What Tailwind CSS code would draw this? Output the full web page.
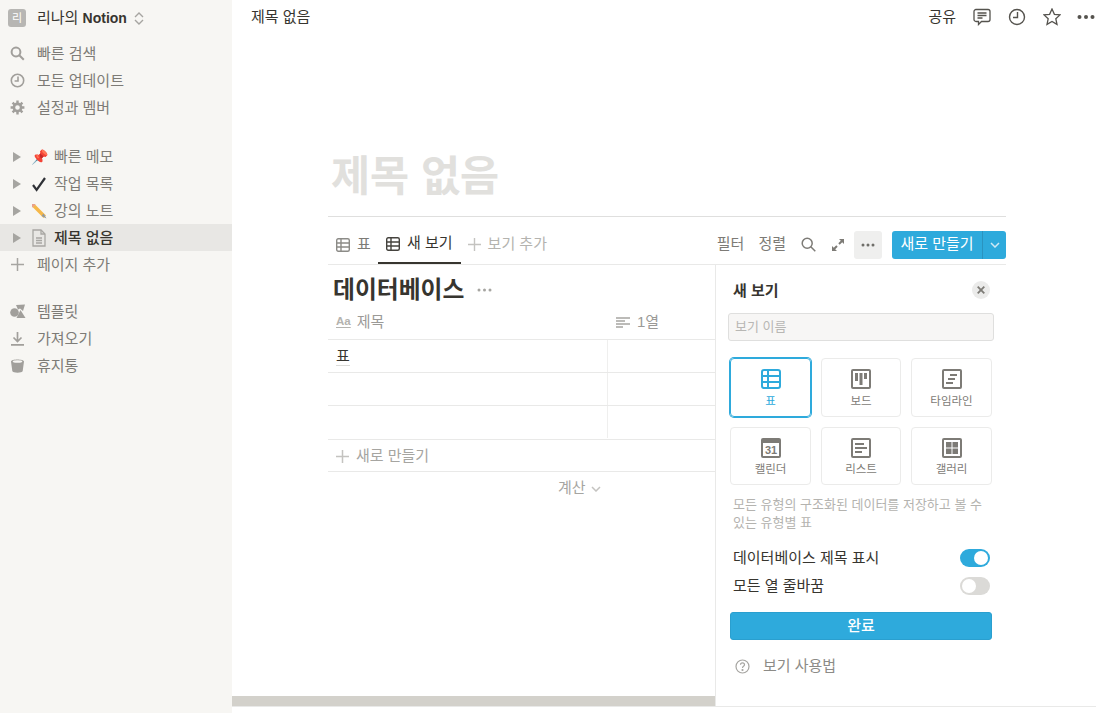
<!DOCTYPE html>
<html lang="ko">
<head>
  <meta charset="UTF-8" />
  <title>제목 없음</title>
  <script src="https://cdn.jsdelivr.net/npm/@tailwindcss/browser@4"></script>
</head>
<body class="w-[1096px] h-[713px] overflow-hidden bg-white text-[#37352f] text-[15px] font-['Liberation_Sans','Noto_Sans_CJK_KR',sans-serif]">
<div class="flex h-[713px]">

  <!-- sidebar -->
  <aside class="w-[232px] shrink-0 bg-[#f7f6f3] text-[#7d7b76]">
    <div class="flex items-center h-[36px] pl-[8px]">
      <span class="w-[18px] h-[18px] rounded-[3px] bg-[#b7b6b3] text-white text-[11px] flex items-center justify-center">리</span>
      <span class="ml-[11px] text-[#37352f]">리나의 <b class="font-bold text-[14px]">Notion</b></span>
      <svg class="ml-[7px]" width="10" height="15" viewBox="0 0 10 15" fill="none" stroke="#a6a5a1" stroke-width="1.4"><path d="M1 6l4-4 4 4M1 9l4 4 4-4"/></svg>
    </div>

    <div class="mt-[4px]">
      <div class="flex items-center h-[27px] pl-[10px]">
        <svg width="15" height="15" viewBox="0 0 15 15" fill="none" stroke="#a19f9b" stroke-width="2"><circle cx="6" cy="6" r="4.4"/><path d="M9.3 9.3l4.5 4.5"/></svg>
        <span class="ml-[12px] mt-[1px]">빠른 검색</span>
      </div>
      <div class="flex items-center h-[27px] pl-[10px]">
        <svg width="15" height="15" viewBox="0 0 15 15" fill="none" stroke="#a19f9b" stroke-width="1.6"><circle cx="7.5" cy="7.5" r="6.2"/><path d="M8 3.6v4.4H4.6"/></svg>
        <span class="ml-[12px] mt-[1px]">모든 업데이트</span>
      </div>
      <div class="flex items-center h-[27px] pl-[10px]">
        <svg width="15" height="15" viewBox="0 0 15 15" fill="none" stroke="#a19f9b"><circle cx="7.5" cy="7.5" r="3.6" stroke-width="2.6"/><path stroke-width="2.4" d="M7.5 .6v2.4M7.5 12v2.4M.6 7.5H3M12 7.5h2.4M2.6 2.6l1.7 1.7M10.7 10.7l1.7 1.7M12.4 2.6l-1.7 1.7M4.3 10.7l-1.7 1.7"/></svg>
        <span class="ml-[12px] mt-[1px]">설정과 멤버</span>
      </div>
    </div>

    <div class="mt-[22px]">
      <div class="flex items-center h-[27px] pl-[12px]">
        <svg width="9" height="10" viewBox="0 0 9 10" fill="#a6a5a1"><path d="M1 0l8 5-8 5z"/></svg>
        <span class="w-[16px] ml-[10px] text-[14px] leading-none">📌</span>
        <span class="ml-[7px] mt-[1px]">빠른 메모</span>
      </div>
      <div class="flex items-center h-[27px] pl-[12px]">
        <svg width="9" height="10" viewBox="0 0 9 10" fill="#a6a5a1"><path d="M1 0l8 5-8 5z"/></svg>
        <svg class="ml-[10px]" width="16" height="16" viewBox="0 0 16 16" fill="none" stroke="#2f3136" stroke-width="2.2"><path d="M2 9l3.6 4.8L14 2"/></svg>
        <span class="ml-[7px] mt-[1px]">작업 목록</span>
      </div>
      <div class="flex items-center h-[27px] pl-[12px]">
        <svg width="9" height="10" viewBox="0 0 9 10" fill="#a6a5a1"><path d="M1 0l8 5-8 5z"/></svg>
        <svg class="ml-[10px]" width="16" height="16" viewBox="0 0 16 16"><path d="M4 1.500l11 11-2.500 2.500-11-11z" fill="#f5b84a"/><path d="M1 1h3l.5.5L1.500 4.500 1 4z" fill="#e8a08c"/><path d="M12.500 10.500L15.500 15.500l-5-2.500z" fill="#8f9aa3"/></svg>
        <span class="ml-[7px] mt-[1px]">강의 노트</span>
      </div>
      <div class="flex items-center h-[27px] pl-[12px] bg-[#e8e7e4]">
        <svg width="9" height="10" viewBox="0 0 9 10" fill="#a6a5a1"><path d="M1 0l8 5-8 5z"/></svg>
        <svg class="ml-[10px]" width="16" height="18" viewBox="0 0 16 18" fill="none" stroke="#a8a7a3" stroke-width="1.300"><path d="M2 1h8l4 4v12H2z"/><path d="M10 1v4h4M5 9h6M5 11.500h6M5 14h6"/></svg>
        <span class="ml-[7px] mt-[1px] text-[#37352f] font-medium">제목 없음</span>
      </div>
      <div class="flex items-center h-[27px] pl-[10px]">
        <svg width="15" height="15" viewBox="0 0 15 15" stroke="#a6a5a1" stroke-width="1.500"><path d="M7.500 1v13M1 7.500h13"/></svg>
        <span class="ml-[12px] mt-[1px]">페이지 추가</span>
      </div>
    </div>

    <div class="mt-[20px]">
      <div class="flex items-center h-[27px] pl-[10px]">
        <svg width="16" height="15" viewBox="0 0 16 15" fill="#a19f9b"><circle cx="4.500" cy="8.500" r="4.300"/><path d="M6 1l9-.5-2 6.500-3-2.500-2 1z"/><path d="M10.500 6l5 8h-9z"/></svg>
        <span class="ml-[11px] mt-[1px]">템플릿</span>
      </div>
      <div class="flex items-center h-[27px] pl-[10px]">
        <svg width="15" height="15" viewBox="0 0 15 15" fill="none" stroke="#a19f9b" stroke-width="1.700"><path d="M7.500 1v9M3.500 6.500l4 4 4-4M1 13.800h13"/></svg>
        <span class="ml-[12px] mt-[1px]">가져오기</span>
      </div>
      <div class="flex items-center h-[27px] pl-[10px]">
        <svg width="15" height="15" viewBox="0 0 15 15" fill="#a19f9b"><path d="M1 3.500C1 .8 14 .8 14 3.500L12.700 13c-.3 2.300-10 2.300-10.400 0z"/><ellipse cx="7.500" cy="3.500" rx="4.800" ry="1.300" fill="#f7f6f3"/></svg>
        <span class="ml-[12px] mt-[1px]">휴지통</span>
      </div>
    </div>
  </aside>

  <!-- main -->
  <main class="flex-1 min-w-0 h-[707px] relative flex flex-col border-b border-[#e9e9e8]">
    <header class="h-[34px] flex items-center pl-[19px] pr-[1px] shrink-0">
      <span>제목 없음</span>
      <span class="ml-auto">공유</span>
      <svg class="ml-[17px]" width="18" height="18" viewBox="0 0 18 18" fill="none" stroke="#55534e" stroke-width="1.300"><path d="M3 1.500h12a2 2 0 0 1 2 2v8a2 2 0 0 1-2 2H8.500l-3 3v-3H3a2 2 0 0 1-2-2v-8a2 2 0 0 1 2-2z"/><path d="M4.500 5h9M4.500 7.500h9M4.500 10h5"/></svg>
      <svg class="ml-[17px]" width="18" height="18" viewBox="0 0 18 18" fill="none" stroke="#55534e" stroke-width="1.400"><circle cx="9" cy="9" r="7.500"/><path d="M9.500 4v5.500H5"/></svg>
      <svg class="ml-[17px]" width="18" height="18" viewBox="0 0 18 18" fill="none" stroke="#55534e" stroke-width="1.300"><path d="M9 1l2.400 5.300 5.600.6-4.200 3.800 1.200 5.700L9 13.500l-5 2.900 1.200-5.700L1 6.900l5.600-.6z"/></svg>
      <svg class="ml-[16px]" width="18" height="18" viewBox="0 0 18 18" fill="#55534e"><circle cx="2.500" cy="9" r="2"/><circle cx="9" cy="9" r="2"/><circle cx="15.500" cy="9" r="2"/></svg>
    </header>

    <div class="ml-[96px] w-[678px] flex-1 flex flex-col min-h-0">
      <h1 class="mt-[115px] h-[56px] leading-[56px] pl-[3px] text-[42.5px] font-bold text-[#e1e0dd] shrink-0">제목 없음</h1>
      <div class="mt-[11px] border-t border-b border-t-[#dfdfde] border-b-[#e9e9e8] h-[49px] pt-[8px] flex items-center shrink-0">
        <div class="w-[50px] h-full flex items-center pl-[8px] text-[#7d7b76]">
          <svg width="14" height="14" viewBox="0 0 14 14" fill="none" stroke="#8c8b87" stroke-width="1.400"><rect x=".7" y=".7" width="12.600" height="12.600" rx="1.500"/><path d="M.7 5h12.600M.7 9h12.600M5 .7v12.600"/></svg>
          <span class="ml-[7px]">표</span>
        </div>
        <div class="h-full flex items-center px-[8px] border-b-2 border-[#37352f]">
          <svg width="14" height="14" viewBox="0 0 14 14" fill="none" stroke="#45433e" stroke-width="1.400"><rect x=".7" y=".7" width="12.600" height="12.600" rx="1.500"/><path d="M.7 5h12.600M.7 9h12.600M5 .7v12.600"/></svg>
          <span class="ml-[7px]">새 보기</span>
        </div>
        <div class="h-full flex items-center pl-[7px] text-[#b4b3af]">
          <svg width="13" height="13" viewBox="0 0 13 13" stroke="#c4c3c0" stroke-width="1.400"><path d="M6.500 0v13M0 6.500h13"/></svg>
          <span class="ml-[7px]">보기 추가</span>
        </div>
        <div class="ml-auto flex items-center text-[#7d7b76]">
          <span>필터</span>
          <span class="ml-[14px]">정렬</span>
          <svg class="ml-[15px]" width="15" height="15" viewBox="0 0 15 15" fill="none" stroke="#7d7b76" stroke-width="1.500"><circle cx="6.200" cy="6.200" r="5"/><path d="M9.800 9.800l4.500 4.500"/></svg>
          <svg class="ml-[16px]" width="12" height="12" viewBox="0 0 12 12" fill="#7d7b76"><path d="M7 0h5v5l-1.800-1.800-2.500 2.500-1.400-1.400 2.500-2.500zM5 12H0V7l1.800 1.800 2.500-2.500 1.400 1.400-2.500 2.500z"/></svg>
          <span class="ml-[10px] w-[28px] h-[28px] rounded-[3px] bg-[#efefee] flex items-center justify-center">
            <svg width="14" height="4" viewBox="0 0 14 4" fill="#6f6e69"><circle cx="2" cy="2" r="1.500"/><circle cx="7" cy="2" r="1.500"/><circle cx="12" cy="2" r="1.500"/></svg>
          </span>
          <div class="ml-[10px] h-[28px] w-[114px] rounded-[3px] bg-[#2eaadc] text-white flex items-center">
            <span class="w-[90px] text-center">새로 만들기</span>
            <span class="w-px h-full bg-[#2a93bf]"></span>
            <span class="flex-1 flex justify-center">
              <svg width="10" height="6" viewBox="0 0 10 6" fill="none" stroke="#cfe9f5" stroke-width="1.500"><path d="M1 1l4 4 4-4"/></svg>
            </span>
          </div>
        </div>
      </div>

      <div class="flex-1 flex min-h-0">
        <!-- table -->
        <section class="w-[388px] shrink-0 border-r border-[#e9e9e8]">
          <div class="h-[47px] pl-[5px] pt-[2px] flex items-center">
            <span class="text-[23.8px] font-bold">데이터베이스</span>
            <svg class="ml-[13px]" width="15" height="4" viewBox="0 0 15 4" fill="#a6a5a1"><circle cx="2" cy="2" r="1.500"/><circle cx="7.500" cy="2" r="1.500"/><circle cx="13" cy="2" r="1.500"/></svg>
          </div>
          <div class="h-[28px] pb-[7px] flex text-[#9b9a97] border-b border-[#e9e9e8]">
            <div class="w-[280px] flex items-center pl-[8px]">
              <span class="text-[11.5px] font-bold text-[#b4b3af] underline underline-offset-2">Aa</span>
              <span class="ml-[6px]">제목</span>
            </div>
            <div class="flex items-center pl-[8px]">
              <svg width="14" height="11" viewBox="0 0 14 11" stroke="#a6a5a1" stroke-width="1.500"><path d="M0 1h14M0 4h9M0 7h14M0 10h7"/></svg>
              <span class="ml-[7px]">1열</span>
            </div>
          </div>
          <div class="h-[33px] flex border-b border-[#e9e9e8]">
            <div class="w-[280px] border-r border-[#efefee] flex items-center pl-[8px]"><span class="border-b border-[#dcdcda] leading-[18px]">표</span></div>
          </div>
          <div class="h-[33px] flex border-b border-[#e9e9e8]"><div class="w-[280px] border-r border-[#efefee]"></div></div>
          <div class="h-[34px] flex border-b border-[#e9e9e8]"><div class="w-[280px] h-[32px] border-r border-[#efefee]"></div></div>
          <div class="h-[32px] pt-[2px] flex items-center pl-[8px] text-[#a6a5a1] border-b border-[#e9e9e8]">
            <svg width="13" height="13" viewBox="0 0 13 13" stroke="#c4c3c0" stroke-width="1.500"><path d="M6.500 0v13M0 6.500h13"/></svg>
            <span class="ml-[7px]">새로 만들기</span>
          </div>
          <div class="h-[31px] pt-[2px] flex items-center pl-[230px] text-[#a6a5a1]">
            <span>계산</span>
            <svg class="ml-[5px]" width="10" height="6" viewBox="0 0 10 6" fill="none" stroke="#c4c3c0" stroke-width="1.500"><path d="M1 1l4 4 4-4"/></svg>
          </div>
        </section>

        <!-- view panel -->
        <section class="flex-1 pl-[12px] pr-[12px]">
          <div class="flex items-center justify-between h-[48px] pt-[2px] pl-[5px] pr-[4px]">
            <span class="font-bold mt-[2px]">새 보기</span>
            <span class="w-[18px] h-[18px] rounded-full bg-[#ebebea] flex items-center justify-center">
              <svg width="8" height="8" viewBox="0 0 8 8" stroke="#7d7b76" stroke-width="1.800"><path d="M.7.7l6.600 6.600M7.300.7L.7 7.300"/></svg>
            </span>
          </div>
          <div class="h-[28px] rounded-[3px] border border-[#dfdfde] bg-[#f7f6f5] pl-[6px] flex items-center text-[#b8b7b4] text-[13px]">보기 이름</div>

          <div class="mt-[17px] ml-[2px] grid grid-cols-[81px_80px_81px] gap-[10px] text-[11.5px] leading-[16px] text-[#7d7b76]">
            <div class="h-[59px] rounded-[4px] border border-[#2eaadc] ring-1 ring-[#2eaadc] text-[#2eaadc] flex flex-col items-center pt-[10px]">
              <svg width="20" height="20" viewBox="0 0 20 20" fill="none" stroke="#2eaadc" stroke-width="2"><rect x="1" y="1" width="18" height="18" rx="2"/><path d="M1 7h18M1 13h18M7 1v18"/></svg>
              <span class="mt-[4px]">표</span>
            </div>
            <div class="h-[59px] rounded-[4px] border border-[#ebebea] flex flex-col items-center pt-[10px]">
              <svg width="20" height="20" viewBox="0 0 20 20"><rect width="20" height="20" rx="2" fill="#7d7b76"/><rect x="2" y="2" width="16" height="16" fill="#fff"/><path fill="#7d7b76" d="M4 4h3v8H4zM8.500 4h3v12h-3zM13 4h3v6h-3z"/></svg>
              <span class="mt-[4px]">보드</span>
            </div>
            <div class="h-[59px] rounded-[4px] border border-[#ebebea] flex flex-col items-center pt-[10px]">
              <svg width="20" height="20" viewBox="0 0 20 20"><rect width="20" height="20" rx="2" fill="#7d7b76"/><rect x="2" y="2" width="16" height="16" fill="#fff"/><path fill="#7d7b76" d="M8 5h7v2H8zM6 9h7v2H6zM4 13h7v2H4z"/></svg>
              <span class="mt-[4px]">타임라인</span>
            </div>
            <div class="h-[58px] rounded-[4px] border border-[#ebebea] flex flex-col items-center pt-[10px]">
              <svg width="20" height="20" viewBox="0 0 20 20"><rect width="20" height="20" rx="2" fill="#7d7b76"/><rect x="2" y="5" width="16" height="13" fill="#fff"/><text x="10" y="16" text-anchor="middle" font-size="11" font-weight="700" fill="#7d7b76" font-family="Liberation Sans">31</text></svg>
              <span class="mt-[3px]">캘린더</span>
            </div>
            <div class="h-[58px] rounded-[4px] border border-[#ebebea] flex flex-col items-center pt-[10px]">
              <svg width="20" height="20" viewBox="0 0 20 20"><rect width="20" height="20" rx="2" fill="#7d7b76"/><rect x="2" y="2" width="16" height="16" fill="#fff"/><path fill="#7d7b76" d="M4 5h9v2H4zM4 9h12v2H4zM4 13h7v2H4z"/></svg>
              <span class="mt-[3px]">리스트</span>
            </div>
            <div class="h-[58px] rounded-[4px] border border-[#ebebea] flex flex-col items-center pt-[10px]">
              <svg width="20" height="20" viewBox="0 0 20 20"><rect width="20" height="20" rx="2" fill="#7d7b76"/><rect x="2" y="2" width="16" height="16" fill="#fff"/><path fill="#7d7b76" d="M4 4h5.500v5.500H4zM10.500 4H16v5.500h-5.500zM4 10.500h5.500V16H4zM10.500 10.500H16V16h-5.500z"/></svg>
              <span class="mt-[3px]">갤러리</span>
            </div>
          </div>

          <p class="mt-[11px] pl-[5px] pr-[2px] text-[13px] leading-[18px] text-[#b4b3af]">모든 유형의 구조화된 데이터를 저장하고 볼 수 있는 유형별 표</p>

          <div class="mt-[12px] pl-[5px] pr-[4px] h-[28px] flex items-center justify-between">
            <span>데이터베이스 제목 표시</span>
            <span class="w-[30px] h-[18px] rounded-full bg-[#2eaadc] flex items-center justify-end p-[2px]"><span class="w-[14px] h-[14px] rounded-full bg-white"></span></span>
          </div>
          <div class="pl-[5px] pr-[4px] h-[28px] flex items-center justify-between">
            <span>모든 열 줄바꿈</span>
            <span class="w-[30px] h-[18px] rounded-full bg-[#dbdad7] flex items-center p-[2px]"><span class="w-[14px] h-[14px] rounded-full bg-white"></span></span>
          </div>

          <div class="mt-[12px] mx-[2px] h-[28px] rounded-[3px] bg-[#2eaadc] border border-[#2a9fcf] text-white font-medium flex items-center justify-center">완료</div>

          <div class="mt-[12px] pl-[7px] h-[28px] flex items-center text-[#8c8b87]">
            <svg width="15" height="15" viewBox="0 0 15 15" fill="none" stroke="#a6a5a1" stroke-width="1.200"><circle cx="7.500" cy="7.500" r="6.500"/><path d="M5.500 5.800c0-2.600 4-2.600 4 0 0 1.500-2 1.500-2 3.100"/><circle cx="7.500" cy="11" r=".5"/></svg>
            <span class="ml-[13px]">보기 사용법</span>
          </div>
        </section>
      </div>
    </div>

    <!-- horizontal scrollbar -->
    <div class="absolute left-0 bottom-0 w-[483px] h-[10px] bg-[#d3d1cb]"></div>
  </main>
</div>
</body>
</html>
